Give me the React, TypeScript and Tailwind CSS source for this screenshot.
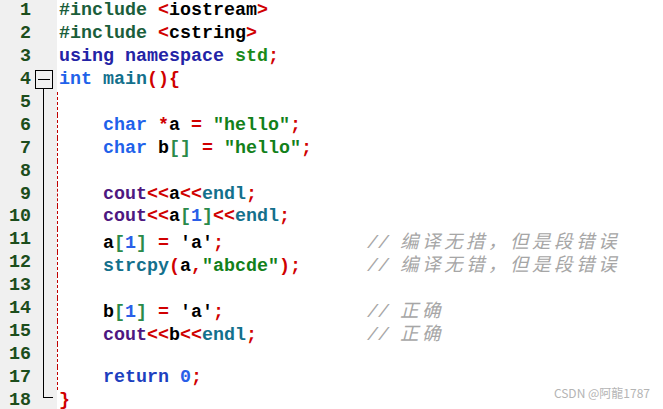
type Tok = [string, string];

const C = {
  pp: 'text-[#1b5e3b]',
  nav: 'text-[#2323a6]',
  ty: 'text-[#1f62ea]',
  fn: 'text-[#13708c]',
  cout: 'text-[#4e1880]',
  op: 'text-[#d00000]',
  str: 'text-[#12801a]',
  std: 'text-[#1a8a1a]',
  num: 'text-[#2a5fe8]',
  br: 'text-[#2a8a4a]',
  ret: 'text-[#1d3fbf]',
  id: 'text-black',
};

const I = '    ';

const lines: { toks: Tok[]; comment?: string }[] = [
  { toks: [['#include ', C.pp], ['<', C.op], ['iostream', C.id], ['>', C.op]] },
  { toks: [['#include ', C.pp], ['<', C.op], ['cstring', C.id], ['>', C.op]] },
  { toks: [['using namespace ', C.nav], ['std', C.std], [';', C.op]] },
  { toks: [['int ', C.ty], ['main', C.fn], ['(){', C.op]] },
  { toks: [] },
  { toks: [[I, C.id], ['char ', C.ty], ['*', C.op], ['a ', C.id], ['= ', C.op], ['"hello"', C.str], [';', C.op]] },
  { toks: [[I, C.id], ['char ', C.ty], ['b', C.id], ['[]', C.br], [' = ', C.op], ['"hello"', C.str], [';', C.op]] },
  { toks: [] },
  { toks: [[I, C.id], ['cout', C.cout], ['<<', C.op], ['a', C.id], ['<<', C.op], ['endl', C.fn], [';', C.op]] },
  { toks: [[I, C.id], ['cout', C.cout], ['<<', C.op], ['a', C.id], ['[', C.br], ['1', C.num], [']', C.br], ['<<', C.op], ['endl', C.fn], [';', C.op]] },
  {
    toks: [[I, C.id], ['a', C.id], ['[', C.br], ['1', C.num], [']', C.br], [' = ', C.op], ["'a'", C.id], [';', C.op]],
    comment: '编译无措，但是段错误',
  },
  {
    toks: [[I, C.id], ['strcpy', C.fn], ['(', C.op], ['a', C.id], [',', C.op], ['"abcde"', C.str], [');', C.op]],
    comment: '编译无错，但是段错误',
  },
  { toks: [] },
  {
    toks: [[I, C.id], ['b', C.id], ['[', C.br], ['1', C.num], [']', C.br], [' = ', C.op], ["'a'", C.id], [';', C.op]],
    comment: '正确',
  },
  {
    toks: [[I, C.id], ['cout', C.cout], ['<<', C.op], ['b', C.id], ['<<', C.op], ['endl', C.fn], [';', C.op]],
    comment: '正确',
  },
  { toks: [] },
  { toks: [[I, C.id], ['return ', C.ret], ['0', C.num], [';', C.op]] },
  { toks: [['}', C.op]] },
];

const FoldCell = ({ n }: { n: number }) => {
  if (n === 4) {
    return (
      <div className="relative h-full w-[26px]">
        <div className="absolute left-[4px] top-[1px] flex h-[19px] w-[18px] items-center justify-center border border-black bg-[#f0f0f0]">
          <div className="h-px w-[12px] bg-black" />
        </div>
        <div className="absolute left-[12px] top-[20px] h-[3px] w-px bg-black" />
      </div>
    );
  }
  if (n > 4 && n < 18) {
    return (
      <div className="flex h-full w-[26px]">
        <div className="ml-[12px] h-full w-px bg-black" />
      </div>
    );
  }
  if (n === 18) {
    return (
      <div className="flex h-full w-[26px] flex-col">
        <div className="ml-[12px] h-[8px] w-[10px] border-b border-l border-black" />
      </div>
    );
  }
  return <div className="h-full w-[26px]" />;
};

export default function App() {
  const used = lines.map((l) => l.toks.reduce((s, t) => s + t[0].length, 0));
  return (
    <div className="relative h-[409px] w-[663px] overflow-hidden bg-white">
      <div className="flex flex-col font-['Liberation_Mono','DejaVu_Sans_Mono',monospace] text-[18.33px] font-bold">
        {lines.map((l, i) => {
          const n = i + 1;
          return (
            <div key={n} className="flex h-[22.94px] leading-[22.94px]">
              <div className="flex bg-[#f0f0f0]">
                <div className="w-[31px] text-right text-[#1c4d1c]">{n}</div>
                <FoldCell n={n} />
              </div>
              <div
                className={
                  n > 4 && n < 18
                    ? 'flex-1 whitespace-pre border-l border-dashed border-[#c00000] pl-[1px]'
                    : 'flex-1 whitespace-pre border-l border-transparent pl-[1px]'
                }
              >
                {l.toks.map((t, k) => (
                  <span key={k} className={t[1]}>
                    {t[0]}
                  </span>
                ))}
                {l.comment && (
                  <span className="font-normal italic text-[#a6a6a6]">
                    {' '.repeat(28 - used[i])}
                    {'// '}
                    <span className="font-['Noto_Sans_CJK_SC',sans-serif] text-[18.5px] tracking-[3.5px]">
                      {l.comment}
                    </span>
                  </span>
                )}
              </div>
            </div>
          );
        })}
      </div>
      <div className="absolute bottom-[7px] right-[13px] font-['Noto_Sans_CJK_SC',sans-serif] text-[12px] text-[#b4b4b4]">
        CSDN @阿龍1787
      </div>
    </div>
  );
}
